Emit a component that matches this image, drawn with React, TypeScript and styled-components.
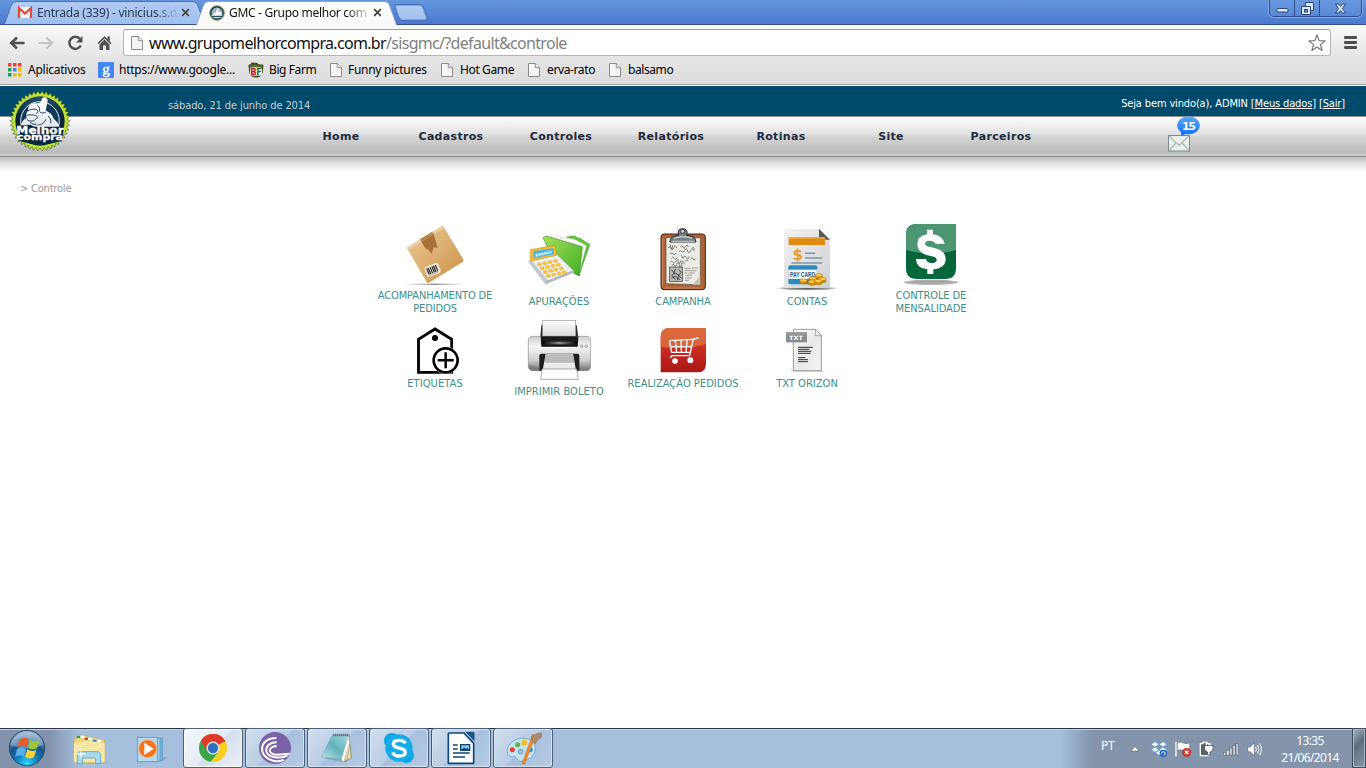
import React from "react";
import styled, { createGlobalStyle } from "styled-components";

const UI = `"Noto Sans", "Open Sans", sans-serif`;
const PAGE = `"DejaVu Sans Condensed", "DejaVu Sans", sans-serif`;

const GlobalStyle = createGlobalStyle`
  * { box-sizing: border-box; }
  html, body { margin: 0; padding: 0; background: #fff; overflow: hidden; }
  svg { display: block; flex: none; }
`;

const Screen = styled.div`
  width: 1366px;
  height: 768px;
  display: flex;
  flex-direction: column;
  overflow: hidden;
  font-family: ${UI};
`;

/* ---------- browser chrome ---------- */

const TabStrip = styled.div`
  height: 25px;
  flex: none;
  display: flex;
  padding-left: 4px;
  background: linear-gradient(#6596de, #4a79cd);
  border-bottom: 1px solid #34508a;
`;

const Tab = styled.div<{ $active?: boolean }>`
  position: relative;
  z-index: ${(p) => (p.$active ? 2 : 1)};
  height: ${(p) => (p.$active ? 25 : 24)}px;
  width: 201px;
  margin-right: -9px;
  padding: 0 14px 0 13px;
  display: flex;
  align-items: center;
  flex: none;
  &::before,
  &::after {
    content: "";
    position: absolute;
    z-index: -1;
    top: 1px;
    bottom: 0;
    border: 1px solid ${(p) => (p.$active ? "#8aa6d2" : "#4d72b4")};
    border-bottom: 0;
    background: ${(p) => (p.$active ? "linear-gradient(#ffffff, #f8f8f8)" : "linear-gradient(#b0cbf3, #a0bfee)")};
  }
  &::before {
    left: 4px;
    width: 110px;
    border-right: 0;
    border-radius: 5px 0 0 0;
    transform: skewX(-20deg);
  }
  &::after {
    right: 4px;
    width: 110px;
    border-left: 0;
    border-radius: 0 5px 0 0;
    transform: skewX(20deg);
  }
`;

const TabTitle = styled.span<{ $active?: boolean }>`
  width: 144px;
  flex: none;
  margin-left: 4px;
  overflow: hidden;
  white-space: nowrap;
  font-size: 12px;
  letter-spacing: ${(p) => (p.$active ? "-0.3px" : "-0.22px")};
  line-height: 18px;
  color: ${(p) => (p.$active ? "#111" : "#2b3850")};
  mask-image: linear-gradient(90deg, #000 118px, transparent 142px);
  padding-top: 1px;
`;

const NewTab = styled.div`
  width: 28px;
  height: 15px;
  margin: 5px 0 0 9px;
  border: 1px solid #86a9e2;
  outline: 1px solid #4670bd;
  border-radius: 3px;
  background: linear-gradient(#b0cbf3, #a3c0ee);
  transform: skewX(20deg);
`;

const WindowControls = styled.div`
  display: flex;
  height: 17px;
  margin-left: auto;
  margin-right: 4px;
  border: 1px solid #2c4f8f;
  border-top: 0;
  border-radius: 0 0 5px 5px;
  box-shadow: 0 0 0 1px #84a9e6;
  overflow: hidden;
`;

const WindowButton = styled.div<{ $w: number }>`
  width: ${(p) => p.$w}px;
  display: flex;
  align-items: center;
  justify-content: center;
  background: linear-gradient(#6a99df, #5888d4);
  & + & {
    border-left: 1px solid #2c4f8f;
  }
`;

const Toolbar = styled.div`
  height: 32px;
  flex: none;
  display: flex;
  align-items: center;
  padding: 3px 9px 0 9px;
  background: linear-gradient(#f9f9f9, #e6e6e6);
`;

const ToolIcons = styled.div`
  display: flex;
  gap: 13px;
  width: 114px;
`;

const UrlField = styled.div`
  width: 1208px;
  height: 27px;
  display: flex;
  align-items: center;
  padding: 0 4px 0 7px;
  border: 1px solid #b5b5b5;
  border-top-color: #9f9f9f;
  border-radius: 3px;
  background: #fff;
`;

const UrlText = styled.span`
  margin-left: 6px;
  font-size: 16px;
  letter-spacing: -0.68px;
  line-height: 22px;
  color: #111;
  white-space: nowrap;
  flex: 1;
  i {
    font-style: normal;
    color: #808080;
  }
`;

const MenuIcon = styled.div`
  width: 13px;
  margin-left: 13px;
  display: grid;
  gap: 2px;
  span {
    height: 3px;
    border-radius: 1px;
    background: #505050;
  }
`;

const BookmarkBar = styled.div`
  height: 29px;
  flex: none;
  display: flex;
  padding: 0 0 2px 8px;
  background: linear-gradient(#e5e5e5, #dcdcdc);
  border-bottom: 1px solid #fff;
  box-shadow: inset 0 -1px #a2a2a2;
`;

const Bookmark = styled.div<{ $w: number }>`
  width: ${(p) => p.$w}px;
  display: flex;
  align-items: center;
  white-space: nowrap;
`;

const BookmarkIcon = styled.div<{ $w: number }>`
  width: ${(p) => p.$w}px;
  flex: none;
`;

const BookmarkText = styled.span<{ $ls: number }>`
  font-size: 12px;
  letter-spacing: ${(p) => p.$ls}px;
  line-height: 18px;
  color: #000;
`;

/* ---------- site ---------- */

const Site = styled.main`
  position: relative;
  flex: 1;
  display: flex;
  flex-direction: column;
  font-family: ${PAGE};
  font-size: 11px;
`;

const TopBar = styled.header`
  height: 30px;
  flex: none;
  display: flex;
  justify-content: space-between;
  padding: 0 21px 0 168px;
  background: #004a6b;
  line-height: 14px;
  white-space: nowrap;
`;

const DateText = styled.span`
  padding-top: 13px;
  color: #c3d0d8;
  letter-spacing: -0.1px;
`;

const Welcome = styled.span`
  padding-top: 11px;
  color: #fff;
  letter-spacing: -0.14px;
`;

const SiteLink = styled.span`
  text-decoration: underline;
`;

const Nav = styled.nav`
  height: 41px;
  flex: none;
  display: flex;
  padding-left: 286px;
  border-top: 1px solid #8f8f8f;
  border-bottom: 1px solid #8d8d8d;
  background: linear-gradient(#fdfdfd 0, #e0e0e0 18px, #d6d6d6 19px, #bababa 36px, #c8c8c8 37px, #c4c4c4 39px);
`;

const NavItem = styled.span`
  width: 110px;
  padding-top: 13px;
  text-align: center;
  font: bold 11px/14px "DejaVu Sans", sans-serif;
  letter-spacing: 0.32px;
  color: #232a3d;
`;

const Mail = styled.div`
  position: relative;
  width: 34px;
  margin-left: 112px;
  padding-top: 18px;
`;

const MailBadge = styled.div`
  position: absolute;
  left: 8px;
  top: -1px;
  width: 24px;
  height: 20px;
`;

const NavShadow = styled.div`
  height: 16px;
  flex: none;
  background: linear-gradient(#bcbcbc, #dedede 35%, #f6f6f6 75%, #fff);
`;

const Logo = styled.div`
  position: absolute;
  left: 9px;
  top: 4px;
`;

const Breadcrumb = styled.div`
  padding: 9px 0 0 20px;
  height: 49px;
  flex: none;
  line-height: 14px;
  color: #999;
  letter-spacing: -0.2px;
`;

const TileGrid = styled.div`
  display: grid;
  grid-template-columns: repeat(5, 124px);
  grid-template-rows: 93px 81px;
  row-gap: 3px;
  padding-left: 373px;
  align-items: center;
`;

const Tile = styled.div<{ $twoLines: boolean }>`
  display: flex;
  flex-direction: column;
  align-items: center;
  gap: 3px;
  padding-bottom: ${(p) => (p.$twoLines ? 0 : 1)}px;
`;

const TileLabel = styled.span<{ $ls: number }>`
  width: 122px;
  text-align: center;
  line-height: 13px;
  font-size: 11px;
  color: #3b8f8b;
  letter-spacing: ${(p) => p.$ls}px;
  white-space: pre-line;
`;

/* ---------- taskbar ---------- */

const Taskbar = styled.footer`
  height: 40px;
  flex: none;
  display: flex;
  padding-left: 7px;
  background: linear-gradient(90deg, #8192aa 0, #8192aa 48px, #a5bfdd 80px, #a5bfdd 1060px, #8394ab 1092px, #8394ab);
  box-shadow: inset 0 1px #2a3341, inset 0 2px #c4d3e6;
`;

const Pinned = styled.div<{ $ml: number }>`
  margin-left: ${(p) => p.$ml}px;
`;

const TaskButtons = styled.div`
  display: flex;
  gap: 2px;
  margin-left: 13px;
`;

const TaskButton = styled.div<{ $active?: boolean }>`
  width: 60px;
  height: 40px;
  display: flex;
  justify-content: center;
  border: 1px solid #4d5f78;
  border-radius: 3px;
  background: ${(p) =>
    p.$active
      ? "linear-gradient(135deg, #f5f8fc, #e3ebf5 50%, #d3dfed 52%, #eaf0f7)"
      : "linear-gradient(135deg, #d3dfee, #bacde4 48%, #a9c1de 52%, #b5cae3)"};
  box-shadow: inset 0 0 0 1px ${(p) => (p.$active ? "#ffffff" : "#d6e2f0")};
  svg {
    margin-top: -1px;
  }
`;

const Tray = styled.div`
  display: flex;
  margin-left: auto;
  color: #fff;
  font-size: 12px;
`;

const Lang = styled.span`
  padding-top: 9px;
  width: 26px;
  line-height: 18px;
  letter-spacing: -0.3px;
`;

const TrayIcons = styled.div`
  display: flex;
  gap: 8px;
  padding-top: 13px;
  width: 143px;
`;

const Clock = styled.div`
  width: 80px;
  padding-top: 4px;
  text-align: center;
  line-height: 17px;
  letter-spacing: -0.65px;
`;

const ShowDesktop = styled.div`
  width: 14px;
  margin-left: 2px;
  border: 1px solid #414d5f;
  box-shadow: inset 0 0 0 1px #a9b6c7;
  background: linear-gradient(135deg, #aab5c4, #5f6d81 40%, #8796ab);
`;

/* ---------- drawings ---------- */

const PageIcon = () => (
  <svg width="12" height="14" viewBox="0 0 12 14">
    <path d="M.5.5h6.8l4.2 4.2v8.8H.5z" fill="#f5f5f5" stroke="#8a8a8a" />
    <path d="M7.3.5v4.2h4.2" fill="#fff" stroke="#8a8a8a" />
  </svg>
);

const CloseX = () => (
  <svg width="9" height="9" viewBox="0 0 9 9">
    <path d="M1.2 1.2l6.6 6.6M7.8 1.2L1.2 7.8" stroke="#444" strokeWidth="1.7" />
  </svg>
);

const Gmail = () => (
  <svg width="16" height="16" viewBox="0 0 16 16">
    <rect x="1" y="3" width="14" height="11" fill="#f4f4f4" />
    <path d="M2 14L7 8.500M14 14L9 8.500" stroke="#d5d5d5" />
    <path d="M2 14V4l6 5.500L14 4v10" fill="none" stroke="#dc4a38" strokeWidth="2.200" />
  </svg>
);

const seal = (cx: number, cy: number, r1: number, r2: number, n: number) =>
  Array.from({ length: n * 2 }, (_, i) => {
    const a = (Math.PI * i) / n;
    const r = i % 2 ? r1 : r2;
    return `${(cx + r * Math.cos(a)).toFixed(1)},${(cy + r * Math.sin(a)).toFixed(1)}`;
  }).join(" ");

const SealFavicon = () => (
  <svg width="16" height="16" viewBox="0 0 16 16">
    <circle cx="8" cy="8" r="7.300" fill="#123d55" stroke="#8aa050" strokeWidth="1" />
    <circle cx="8" cy="8" r="5.500" fill="#9fb4c2" />
    <path d="M4 9l3-2 1.500-4 1 .5v3l3 1v2.500L4 10z" fill="#fff" />
    <path d="M2 10.500h12l-1.500 2H3.500z" fill="#eef3f5" />
    <path d="M3 11.500h10" stroke="#2a4d62" />
  </svg>
);

const LogoDrawing = () => (
  <svg width="62" height="62" viewBox="27 12 186 186">
    <defs>
      <linearGradient id="hand" x1="0" y1="0" x2="0" y2="1">
        <stop offset="0" stopColor="#fff" />
        <stop offset="1" stopColor="#d9e2e8" />
      </linearGradient>
      <linearGradient id="ring" x1="0" y1="0" x2="0" y2="1">
        <stop offset="0" stopColor="#22506f" />
        <stop offset=".5" stopColor="#041f38" />
        <stop offset="1" stopColor="#0b3554" />
      </linearGradient>
    </defs>
    <polygon points={seal(120, 105, 81, 90, 42)} fill="#c0e22e" stroke="#24482c" strokeWidth="1.500" />
    <circle cx="120" cy="105" r="74" fill="url(#ring)" />
    <circle cx="120" cy="105" r="58" fill="#0d3a5a" stroke="#e6eef2" strokeWidth="3" />
    <path
      d="M62 122c2-14 8-22 18-26-2-8-2-16 4-22 0-12 6-22 16-22h14c4 0 8-2 10-6 0-8 4-12 10-12 8 0 10 8 8 16-2 10-4 16-4 24 14 6 20 14 24 26 8 6 14 12 16 22l-4 20H66z"
      fill="url(#hand)"
    />
    <path d="M84 74c6-2 14-6 24-4 8 2 8 12 0 12M80 88c8-2 16-2 26 0 8 2 8 12-2 12M80 100c6 6 14 6 24 4M112 58c6 4 8 10 6 18M90 108c4 6 12 8 20 6M138 78c-6 4-14 4-18 0M144 90c6 4 10 12 8 22M112 118c14-2 22-8 26-18" fill="none" stroke="#16384f" strokeWidth="2.800" />
    <path d="M48 119l42-3 14 6h88l-6 42q-66 22-130 0z" fill="#06263f" />
    <text textAnchor="middle" fontFamily="DejaVu Sans" fontWeight="bold" fill="#fff" stroke="#fff" strokeWidth=".8">
      <tspan x="120" y="143" textLength="142" lengthAdjust="spacingAndGlyphs" fontSize="31">Melhor</tspan>
      <tspan x="120" y="163" textLength="138" lengthAdjust="spacingAndGlyphs" fontSize="26">compra</tspan>
    </text>
  </svg>
);

const BoxIcon = () => (
  <svg width="64" height="64" viewBox="99 21 192 192">
    <defs>
      <linearGradient id="card" x1="0" y1="0" x2="1" y2="1">
        <stop offset="0" stopColor="#ecc894" />
        <stop offset=".5" stopColor="#dcaf72" />
        <stop offset="1" stopColor="#c98f40" />
      </linearGradient>
      <linearGradient id="boxline">
        <stop offset="0" stopColor="#999" stopOpacity="0" />
        <stop offset=".5" stopColor="#777" />
        <stop offset="1" stopColor="#999" stopOpacity="0" />
      </linearGradient>
    </defs>
    <rect x="99" y="206" width="190" height="3.500" fill="url(#boxline)" />
    <path d="M110 98L216 33q3-1 5 2l60 100q0 4-3 6L176 204q-4 0-6-3z" fill="url(#card)" />
    <path d="M111 97L216 34l6 6-107 65z" fill="#f1d5a6" opacity=".7" />
    <path d="M150 73l36-22 5 6 12 42-12-2-6 20-12-14-6-2z" fill="#a8703a" />
    <path d="M152 74l34-22 4 7-34 22z" fill="#bd8950" />
    <g transform="rotate(-22 188 165)">
      <rect x="166" y="149" width="44" height="32" rx="8" fill="#f6ead6" />
      <path d="M173 154v20M178 154v20M184 154v20M190 154v20M195 154v20M201 154v20" stroke="#222" strokeWidth="3.500" />
      <path d="M172 177h30" stroke="#a89884" strokeWidth="2" />
    </g>
  </svg>
);

const CalcIcon = () => (
  <svg width="64" height="64" viewBox="471 39 192 192">
    <defs>
      <linearGradient id="green" x1="0" y1="0" x2="1" y2="1">
        <stop offset="0" stopColor="#a6e05a" />
        <stop offset="1" stopColor="#3fae26" />
      </linearGradient>
    </defs>
    <path d="M590 64l42 6 28 20-32 92-12-4z" fill="#4fb52c" />
    <path d="M570 66l66 10 14 14-24 90z" fill="#f7f7f7" stroke="#c9d0c4" strokeWidth="2" />
    <path d="M594 62l20 0 46 26-3 8z" fill="#62c33a" />
    <path d="M519 68l10-5 108 32-9 88-70-36z" fill="url(#green)" stroke="#3b962a" strokeWidth="2" />
    <path d="M479 136l80-18 53 51-84 36z" fill="#eef0f2" />
    <path d="M475 140l8-6 54 66-10 9z" fill="#c4c9cf" />
    <path d="M527 208l84-35v-8l-84 34z" fill="#b3b8c0" />
    <path d="M482 104l74-13 3 30-77 17z" fill="#f7bd2b" stroke="#cf8e10" strokeWidth="2" />
    <path d="M490 109l61-10 1 19-61 12z" fill="#45b4e9" />
    <path d="M497 121l48-10" stroke="#e2f8ff" strokeWidth="8" strokeDasharray="6 3" />
    <g fill="#ffcb33" stroke="#e09a18" strokeWidth="1.500">
      {[0, 1, 2, 3].flatMap((r) =>
        [0, 1, 2, 3].map((c) => <ellipse key={`${r}${c}`} cx={508 + c * 16 + r * 9} cy={148 - c * 3.5 + r * 11.5} rx="6" ry="4.500" />)
      )}
    </g>
  </svg>
);

const ClipboardIcon = () => (
  <svg width="64" height="64" viewBox="123 39 192 192">
    <rect x="153" y="57" width="133" height="167" rx="9" fill="#ad6336" stroke="#3a221a" strokeWidth="3" />
    <path d="M158 68v146M162 219h116" stroke="#cf8a5c" strokeWidth="3" />
    <path d="M168 68h103v116l-4 25-99-3z" fill="#ecebe6" stroke="#55483f" strokeWidth="2" />
    <path d="M246 209l25-26v26z" fill="#c9c6bd" />
    <path d="M180 88c5 22 6 20 8 2M174 98q6-6 10 2t8-3 8 2M212 96q4-8 7 0t8-2q6-8 8 2M180 117q6-6 10 0t9-4M206 110q6-6 9 0t9-4 9 2 11-4 8 4M184 130q5-9 9 0t8-3M214 120l5 10q6-12 10-2t9-4M180 142q6-7 9 0t9-3 8 2 8-6M226 138q6-6 9 0M242 132q6-8 8 0t8-2M186 152q4-9 7-1t7-3 8 3 7-4 8 1" stroke="#444" strokeWidth="1.900" fill="none" />
    <rect x="179" y="156" width="38" height="43" fill="#b9b7b2" stroke="#333" strokeWidth="2" />
    <path d="M184 164l8 10-6 8 10 12M196 162l-4 12 14 6-4 16M206 164l8 8-8 8 8 10M184 190l12-6 14 10" stroke="#333" strokeWidth="2.500" fill="none" />
    <path d="M222 160h20m4-1h18M224 167h36M222 174h10m4 0h18M226 181h20M225 189h20M224 196h12" stroke="#777" strokeWidth="2" />
    <path d="M180 81q0-14 14-18l12-2q-6-20 12-20t12 20l14 2q12 2 14 18z" fill="#777e80" stroke="#292e30" strokeWidth="3" />
    <circle cx="218" cy="49" r="6" fill="#ddd" stroke="#333" strokeWidth="3" />
    <path d="M192 70q26-10 54 0" stroke="#b9c2c4" strokeWidth="5" fill="none" />
    <path d="M184 79h70" stroke="#cdd4d5" strokeWidth="3" />
  </svg>
);

const Coin = ({ x, y }: { x: number; y: number }) => (
  <g stroke="#a96b00" strokeWidth="1.500">
    <path d={`M${x - 11} ${y}v8q11 7 22 0v-8z`} fill="#d98e10" />
    <ellipse cx={x} cy={y} rx="11" ry="5" fill="#ffcd45" />
  </g>
);

const BillIcon = () => (
  <svg width="64" height="64" viewBox="495 39 192 192">
    <defs>
      <linearGradient id="paper" x1="0" y1="0" x2="1" y2="1">
        <stop offset="0" stopColor="#f2f2f2" />
        <stop offset="1" stopColor="#cfd0d2" />
      </linearGradient>
      <radialGradient id="billshade">
        <stop offset="0" stopColor="#555" />
        <stop offset=".7" stopColor="#888" stopOpacity=".8" />
        <stop offset="1" stopColor="#aaa" stopOpacity="0" />
      </radialGradient>
    </defs>
    <ellipse cx="592" cy="220" rx="95" ry="7" fill="url(#billshade)" />
    <path d="M522 46q0-4 4-4h101l33 33v141q0 3-4 3H526q-4 0-4-4z" fill="url(#paper)" />
    <path d="M627 41l33 34-33-3z" fill="#55585c" />
    <rect x="536" y="66" width="109" height="24" fill="#e08a12" />
    <path d="M536 66h109v5H536z" fill="#f2a83c" />
    <text x="563" y="136" textAnchor="middle" fontFamily="DejaVu Sans" fontWeight="bold" fontSize="45" fill="#f09a1a">$</text>
    <path d="M585 115h31M585 129h52M544 144h93" stroke="#7f98ad" strokeWidth="4.500" />
    <rect x="535" y="151" width="87" height="57" rx="6" fill="#2b8cc2" />
    <path d="M535 164h87v28h-87z" fill="#f1f6f9" />
    <text x="540" y="185" textLength="76" lengthAdjust="spacingAndGlyphs" fontFamily="Liberation Sans" fontWeight="bold" fontSize="20" fill="#1e5d8c">PAY CARD</text>
    <Coin x={626} y={181} />
    <Coin x={608} y={190} />
    <Coin x={637} y={192} />
    <Coin x={580} y={196} />
    <Coin x={606} y={200} />
    <Coin x={625} y={198} />
  </svg>
);

const DollarIcon = () => (
  <svg width="64" height="64" viewBox="147 21 192 192">
    <defs>
      <linearGradient id="dgreen" x1="0" y1="0" x2="0" y2="1">
        <stop offset="0" stopColor="#046236" />
        <stop offset="1" stopColor="#07683b" />
      </linearGradient>
    </defs>
    <ellipse cx="243" cy="202" rx="82" ry="8" fill="#b5b5b5" />
    <ellipse cx="243" cy="201" rx="62" ry="5" fill="#a5a5a5" />
    <path d="M200 27h118v133q0 32-32 32h-86q-32 0-32-32V59q0-32 32-32z" fill="url(#dgreen)" />
    <path d="M200 27h118v78q-70 22-150 0V59q0-32 32-32z" fill="#4d9673" />
    <path
      d="M231 44h18v14q28 3 35 28h-27q-6-9-18-9-14 0-14 9 0 7 16 10 46 8 46 35 0 28-37 32v14h-18v-14q-34-3-34-31h30q3 12 17 12 15 0 15-10 0-7-15-10-43-8-43-37 0-24 29-29z"
      fill="#fff"
    />
  </svg>
);

const TagIcon = () => (
  <svg width="48" height="48" viewBox="123 333 144 144">
    <path d="M145.500 472V373L195 342l50 31v99z" fill="#fff" stroke="#000" strokeWidth="8.500" />
    <circle cx="195" cy="369" r="9" />
    <circle cx="227" cy="436" r="41" fill="#fff" />
    <circle cx="227" cy="436" r="36" fill="#fff" stroke="#000" strokeWidth="8" />
    <path d="M203 436h48M227 412v48" stroke="#000" strokeWidth="7.500" />
  </svg>
);

const PrinterIcon = () => (
  <svg width="64" height="64" viewBox="471 309 192 192">
    <defs>
      <linearGradient id="prn" x1="0" y1="0" x2="0" y2="1">
        <stop offset="0" stopColor="#cfcfcf" />
        <stop offset=".3" stopColor="#f4f4f4" />
        <stop offset=".7" stopColor="#cfcfcf" />
        <stop offset="1" stopColor="#6e6e6e" />
      </linearGradient>
      <linearGradient id="sheet" x1="0" y1="0" x2="0" y2="1">
        <stop offset="0" stopColor="#fff" />
        <stop offset="1" stopColor="#d2d2d2" />
      </linearGradient>
      <linearGradient id="slot">
        <stop offset="0" stopColor="#000" />
        <stop offset=".5" stopColor="#8c8c8c" />
        <stop offset="1" stopColor="#000" />
      </linearGradient>
    </defs>
    <path d="M514 330h106l6 48H510z" fill="#26282a" />
    <rect x="518" y="316" width="99" height="56" fill="url(#sheet)" stroke="#999" strokeWidth="2" />
    <rect x="475" y="364" width="187" height="103" rx="13" fill="url(#prn)" stroke="#8b8b8b" strokeWidth="2" />
    <path d="M512 364h113l-2 32H514z" fill="#17191b" />
    <rect x="516" y="380" width="105" height="8" fill="url(#slot)" />
    <path d="M508 397h122" stroke="#fff" strokeWidth="3" />
    <circle cx="635" cy="394" r="4" fill="#eee" stroke="#777" strokeWidth="2" />
    <circle cx="649" cy="394" r="4" fill="#eee" stroke="#777" strokeWidth="2" />
    <path d="M508 467v-45q0-6 6-6h108q6 0 6 6v45z" fill="#1b1d1f" />
    <path d="M527 417h82l14 76H513z" fill="url(#sheet)" />
    <path d="M527 417h82l5 26H523z" fill="#9a9a9a" opacity=".65" />
    <path d="M516 462h104l5 31H512z" fill="#fff" stroke="#8a8a8a" strokeWidth="2" />
    <path d="M476 450q0 17 14 17h18v-10z" fill="#777" opacity=".6" />
  </svg>
);

const CartIcon = () => (
  <svg width="48" height="48" viewBox="147 333 144 144">
    <defs>
      <linearGradient id="red" x1="0" y1="0" x2="0" y2="1">
        <stop offset="0" stopColor="#d4551f" />
        <stop offset=".6" stopColor="#c3251f" />
        <stop offset="1" stopColor="#a81714" />
      </linearGradient>
    </defs>
    <path d="M178 339h110v107q0 26-26 26H152V365q0-26 26-26z" fill="url(#red)" />
    <path d="M178 339h110v48q-60 20-136 8v-30q0-26 26-26z" fill="#dd7345" opacity=".75" />
    <path d="M266 369l-16 3-11 50H189M179 377l69-4M178 378l7 34h56M182 395h62M196 378l4 34M213 377l1 35M231 376l-3 36M189 422q-8 1-8 8" fill="none" stroke="#fff" strokeWidth="4" />
    <circle cx="195" cy="438" r="8.500" fill="#fff" />
    <circle cx="241" cy="436" r="9" fill="#fff" />
  </svg>
);

const TxtIcon = () => (
  <svg width="48" height="48" viewBox="519 333 144 144">
    <defs>
      <linearGradient id="txtpage" x1="0" y1="0" x2="1" y2="1">
        <stop offset="0" stopColor="#fdfdfd" />
        <stop offset=".5" stopColor="#e9e9e9" />
        <stop offset="1" stopColor="#f4f4f4" />
      </linearGradient>
    </defs>
    <path d="M542 469h100" stroke="#ddd" strokeWidth="4" />
    <path d="M550 343h66l18 19v105h-84z" fill="url(#txtpage)" stroke="#999" strokeWidth="3" />
    <path d="M616 343v19h18z" fill="#fff" stroke="#999" strokeWidth="2.500" />
    <rect x="528" y="351" width="63" height="31" fill="#8b8b8b" />
    <path d="M528 351h63v8h-63z" fill="#9d9d9d" />
    <text x="537" y="374" textLength="42" lengthAdjust="spacingAndGlyphs" fontFamily="DejaVu Sans" fontWeight="bold" fontSize="18" fill="#fff">TXT</text>
    <path d="M564 397h45M564 403h34M564 409h40M564 415h38M564 428h22M564 434h30M564 440h30" stroke="#222" strokeWidth="2.800" />
  </svg>
);

const StartOrb = () => (
  <svg width="40" height="40" viewBox="21 24 120 120">
    <defs>
      <radialGradient id="orb" cx=".5" cy=".95" r=".95">
        <stop offset="0" stopColor="#2be0ff" />
        <stop offset=".3" stopColor="#0f86c0" />
        <stop offset=".6" stopColor="#17518a" />
        <stop offset="1" stopColor="#9dbad3" />
      </radialGradient>
    </defs>
    <circle cx="81" cy="84" r="53" fill="url(#orb)" stroke="#274a6c" strokeWidth="3" />
    <path d="M32 76a50 50 0 0 1 98 0q-50 18-98 0z" fill="#fff" opacity=".3" />
    <path d="M58 59q14-9 28-2l-6 24q-13-7-27 0z" fill="#ee5a24" />
    <path d="M90 59q12 8 29 2l-8 24q-13 7-27-2z" fill="#9bc53b" />
    <path d="M51 87q13-9 27 0l-6 24q-11-8-26-1z" fill="#5aafe9" />
    <path d="M82 88q13 9 27 2l-7 22q-13 7-27-1z" fill="#fdcf35" />
  </svg>
);

const ExplorerIcon = () => (
  <svg width="40" height="40" viewBox="207 24 120 120">
    <path d="M222 58q0-4 4-4h6v-8h28l4 6h28v6h18q4 0 4 4v62q0 4-4 4h-82q-5 0-5-4z" fill="#ecd27b" stroke="#c4a54c" strokeWidth="2" />
    <rect x="231" y="47" width="22" height="7" fill="#fff" /><rect x="231" y="47" width="10" height="7" fill="#23a52e" />
    <rect x="254" y="53" width="22" height="7" fill="#fff" /><rect x="254" y="53" width="10" height="7" fill="#c9472c" />
    <rect x="278" y="59" width="26" height="7" fill="#fff" /><rect x="278" y="59" width="12" height="7" fill="#2b8bdc" />
    <path d="M222 70l44-8 48 8v53q0 4-4 4h-84q-4 0-4-4z" fill="#f8e8a8" />
    <path d="M228 86l72-14M228 98l84-8" stroke="#eedb95" strokeWidth="2" />
    <path d="M232 103l6-8h58l6 8v28h-15v-17h-39v17h-16z" fill="#a6d8ee" stroke="#5aa0c6" strokeWidth="2.500" />
    <path d="M243 84l2 15 15 3-15 3-2 15-2-15-15-3 15-3z" fill="#fff" opacity=".9" />
  </svg>
);

const PlayerIcon = () => (
  <svg width="40" height="40" viewBox="390 24 120 120">
    <path d="M470 124l28-14v8z" fill="#7389a3" opacity=".6" />
    <path d="M425 52l62 3v67l-62 3z" fill="#78b5dc" stroke="#4c8fbe" strokeWidth="2" />
    <path d="M418 52l62 2v70l-62 1z" fill="#9ccbe6" stroke="#5596c2" strokeWidth="2" />
    <rect x="412" y="52" width="60" height="73" fill="#b7d9ec" stroke="#5c9cc6" strokeWidth="2.500" />
    <circle cx="443" cy="86" r="27" fill="#f4731f" stroke="#fbbd83" strokeWidth="2.500" />
    <path d="M433 68l28 18-28 19z" fill="#fff" />
  </svg>
);

const ChromeIcon = () => (
  <svg width="40" height="40" viewBox="579 24 120 120">
    <circle cx="639" cy="84" r="42" fill="#f7cf1c" />
    <path d="M639 84L602.600 63A42 42 0 0 1 675.400 63z" fill="#dd3a2a" />
    <path d="M602.600 63A42 42 0 0 0 632 125.500L657 94 639 84z" fill="#3ba648" />
    <path d="M639 65h37.500A42 42 0 0 0 602.600 63L621 92z" fill="#dd3a2a" />
    <circle cx="639" cy="84" r="19.500" fill="#f3f3f3" />
    <circle cx="639" cy="84" r="15.500" fill="#2e6fc0" />
  </svg>
);

const BitTorrentIcon = () => (
  <svg width="40" height="40" viewBox="765 24 120 120">
    <circle cx="825" cy="84" r="48" fill="#7a62a7" />
    <g fill="none" stroke="#fff" strokeWidth="6">
      <path d="M829 54C775 54 772 112 820 122Q840 127 851 119" />
      <path d="M830 67C792 66 786 108 825 112Q848 115 862 107" />
      <path d="M830 79C804 78 800 104 832 104L869 101" />
    </g>
  </svg>
);

const NotepadIcon = () => (
  <svg width="40" height="40" viewBox="51 24 120 120">
    <defs>
      <linearGradient id="note" x1="1" y1="0" x2="0" y2="1">
        <stop offset="0" stopColor="#a9dcdc" />
        <stop offset=".5" stopColor="#63b3bd" />
        <stop offset="1" stopColor="#c2e4e6" />
      </linearGradient>
    </defs>
    <path d="M70 115l54-3 20 14h-20z" fill="#55708d" opacity=".35" />
    <path d="M147 46l7 68-24 12-6-10z" fill="#e8e0b4" stroke="#7c765a" strokeWidth="2" />
    <path d="M146 60l-12 62M149 70l-8 50" stroke="#a59f80" strokeWidth="2" />
    <path d="M97 46h50l-23 73-60-8z" fill="url(#note)" stroke="#4c8d96" strokeWidth="1" />
    <path d="M146 48l-22 70 6 8 18-60z" fill="#fff" />
    <path d="M100 45h48" stroke="#4e5152" strokeWidth="7" strokeDasharray="3 3" />
  </svg>
);

const SkypeIcon = () => (
  <svg width="40" height="40" viewBox="237 24 120 120">
    <circle cx="275" cy="62" r="23" fill="#06a7e5" />
    <circle cx="319" cy="106" r="23" fill="#06a7e5" />
    <circle cx="297" cy="84" r="41" fill="#12ade9" />
    <path d="M316 70q-4-9-19-9-17 0-17 11 0 8 17 12 19 4 19 13 0 11-19 11-15 0-19-11" fill="none" stroke="#fff" strokeWidth="10" />
  </svg>
);

const WriterIcon = () => (
  <svg width="40" height="40" viewBox="423 24 120 120">
    <path d="M447 39h45l29 31v58q0 2-2 2h-72q-2 0-2-2V41q0-2 2-2z" fill="#fff" stroke="#0d4677" strokeWidth="5" />
    <path d="M499 37h23v24z" fill="#175a90" stroke="#0d4677" strokeWidth="3" />
    <path d="M459 75h14M459 87h14M459 99h50M459 111h36" stroke="#0d4677" strokeWidth="5" />
    <rect x="482" y="74" width="27" height="17" fill="#8ecbf0" stroke="#0d4677" strokeWidth="4" />
    <path d="M484 90l8-8 6 4 4-3 6 7z" fill="#0d4677" />
  </svg>
);

const PaintIcon = () => (
  <svg width="40" height="40" viewBox="609 24 120 120">
    <path d="M622 93c0-24 26-42 54-38 22 3 32 18 30 34-2 18-20 32-42 35-14 1-12-14-22-14-8 0-20 2-20-17z" fill="#c3e2f3" stroke="#6ba3c6" strokeWidth="2.500" />
    <circle cx="662" cy="95" r="7" fill="#9fc0d8" stroke="#4e86ab" strokeWidth="2" />
    <circle cx="637" cy="89" r="7.500" fill="#e5402d" />
    <circle cx="653" cy="74" r="7.500" fill="#58b947" />
    <circle cx="673" cy="68" r="8.500" fill="#f2bd1e" />
    <circle cx="691" cy="89" r="7.500" fill="#2d9be5" />
    <path d="M698 64l8 4-32 84-8-2z" transform="translate(0 -20)" fill="#ef8b2b" stroke="#c5661a" strokeWidth="1.500" />
    <path d="M697 62l-3-14 20-8 11 0-1 11-14 12-4 9z" fill="#b08a64" stroke="#8a6645" strokeWidth="1.500" />
  </svg>
);

const trayIcons = [
  <svg key="box" width="16" height="16" viewBox="276 63 48 48">
    <path d="M288 65l12 8-12 8-12-8zM312 65l12 8-12 8-12-8zM288 81l12 8-12 8-12-8zM312 81l12 8-12 8-12-8zM289 98l11-7 11 7-11 8z" fill="#eef7fe" stroke="#3b8ad0" strokeWidth="1.500" />
    <circle cx="313" cy="100" r="11" fill="#1c63c0" />
    <path d="M308 103a5.500 5.500 0 1 1 6 3" fill="none" stroke="#fff" strokeWidth="3" />
  </svg>,
  <svg key="flag" width="16" height="16" viewBox="348 63 48 48">
    <path d="M351 65v44" stroke="#fff" strokeWidth="4" />
    <path d="M355 69q10-4 18 0t19 0v22q-10 4-19 0t-18 0z" fill="#fff" stroke="#56616e" strokeWidth="1.500" />
    <circle cx="383" cy="97" r="12.500" fill="#d8352a" stroke="#8d2018" strokeWidth="1.500" />
    <path d="M378 92l10 10M388 92l-10 10" stroke="#fff" strokeWidth="4" />
  </svg>,
  <svg key="power" width="16" height="16" viewBox="420 63 48 48">
    <path d="M424 71h8v-4h12v4h6v36h-26z" fill="#59636f" stroke="#fff" strokeWidth="4" />
    <path d="M442 78v-9M454 78v-9" stroke="#fff" strokeWidth="4" />
    <path d="M437 77h25v8q0 9-9 11v9h-7v-9q-9-2-9-11z" fill="#fff" stroke="#333c47" strokeWidth="2" />
  </svg>,
  <svg key="signal" width="16" height="16" viewBox="492 63 48 48">
    {[0, 1, 2, 3, 4].map((i) => (
      <rect key={i} x={493 + i * 9.5} y={98 - i * 7} width="7.500" height={7 + i * 7} fill={i < 2 ? "#fff" : "#c7cdd6"} stroke="#4c5868" strokeWidth="1.500" />
    ))}
  </svg>,
  <svg key="sound" width="16" height="16" viewBox="564 63 48 48">
    <path d="M566 81h8l12-13v40l-12-13h-8z" fill="#fff" stroke="#3f4a58" strokeWidth="1.500" />
    <path d="M590 80q4 8 0 16M596 75q7 13 0 26M602 70q10 18 0 36" fill="none" stroke="#fff" strokeWidth="2.800" />
  </svg>,
];

const bookmarks = [
  {
    text: "Aplicativos", w: 90, iw: 20, ls: -0.25,
    icon: (
      <svg width="14" height="14" viewBox="0 0 14 14">
        {["#ee4035", "#ee4035", "#ee4035", "#17a05e", "#4285f4", "#f9bb06", "#17a05e", "#f9bb06", "#f9bb06"].map((c, i) => (
          <rect key={i} x={(i % 3) * 5} y={Math.floor(i / 3) * 5} width="3.500" height="3.500" fill={c} />
        ))}
      </svg>
    ),
  },
  {
    text: "https://www.google...", w: 150, iw: 21, ls: -0.25,
    icon: (
      <svg width="16" height="16" viewBox="0 0 16 16">
        <rect width="16" height="16" rx="1" fill="#4285f4" />
        <text x="8" y="11.500" textAnchor="middle" fontFamily="Liberation Serif" fontSize="15" fill="#fff" stroke="#fff" strokeWidth=".4">g</text>
      </svg>
    ),
  },
  {
    text: "Big Farm", w: 82, iw: 21, ls: -0.4,
    icon: (
      <svg width="16" height="16" viewBox="0 0 16 16">
        <path d="M1 3q5 0 7-2 3 3 7 2l-1 8q-2 5-6 4-6 0-6.500-6z" fill="#56752b" stroke="#2b3d15" />
        <path d="M3 1.500q4-1 6 1.500" stroke="#6d3f1c" strokeWidth="1.500" fill="none" />
        <rect x="2" y="5.500" width="12" height="8" rx="2" fill="#fff" />
        <text x="2.200" y="12.800" fontFamily="DejaVu Sans" fontWeight="bold" fontSize="8.500" fill="#b9151b">B</text>
        <text x="8.300" y="12.800" fontFamily="DejaVu Sans" fontWeight="bold" fontSize="8.500" fill="#2c6b2a">F</text>
      </svg>
    ),
  },
  { text: "Funny pictures", w: 111, iw: 18, ls: -0.3, icon: <PageIcon /> },
  { text: "Hot Game", w: 87, iw: 19, ls: -0.38, icon: <PageIcon /> },
  { text: "erva-rato", w: 81, iw: 19, ls: -0.38, icon: <PageIcon /> },
  { text: "balsamo", w: 90, iw: 19, ls: -0.42, icon: <PageIcon /> },
];

const navItems = ["Home", "Cadastros", "Controles", "Relatórios", "Rotinas", "Site", "Parceiros"];

const tiles = [
  { label: "ACOMPANHAMENTO DE\nPEDIDOS", icon: <BoxIcon />, ls: -0.12 },
  { label: "APURAÇÕES", icon: <CalcIcon />, ls: 0.03 },
  { label: "CAMPANHA", icon: <ClipboardIcon />, ls: -0.05 },
  { label: "CONTAS", icon: <BillIcon />, ls: 0 },
  { label: "CONTROLE DE\nMENSALIDADE", icon: <DollarIcon />, ls: -0.1 },
  { label: "ETIQUETAS", icon: <TagIcon />, ls: 0.1 },
  { label: "IMPRIMIR BOLETO", icon: <PrinterIcon />, ls: 0.06 },
  { label: "REALIZAÇÃO PEDIDOS", icon: <CartIcon />, ls: 0.03 },
  { label: "TXT ORIZON", icon: <TxtIcon />, ls: 0.03 },
];

export default function App() {
  return (
    <Screen>
      <GlobalStyle />
      <TabStrip>
        <Tab>
          <Gmail />
          <TabTitle>Entrada (339) - vinicius.s.d</TabTitle>
          <CloseX />
        </Tab>
        <Tab $active>
          <SealFavicon />
          <TabTitle $active>GMC - Grupo melhor com</TabTitle>
          <CloseX />
        </Tab>
        <NewTab />
        <WindowControls>
          <WindowButton $w={24}>
            <svg width="13" height="10" viewBox="0 0 13 10"><rect x="1" y="5.500" width="11" height="3.500" rx="1" fill="#dce9fb" stroke="#2c4777" /></svg>
          </WindowButton>
          <WindowButton $w={25}>
            <svg width="13" height="13" viewBox="0 0 13 13">
              <path d="M4.500.5h8v8H9.500v4H.5v-8h4z" fill="#dce9fb" stroke="#2c4777" />
              <path d="M4.500 4.500h5v4" fill="none" stroke="#2c4777" />
              <rect x="3.500" y="7.500" width="3" height="2.500" fill="#6a99df" stroke="#2c4777" />
            </svg>
          </WindowButton>
          <WindowButton $w={42}>
            <svg width="13" height="11" viewBox="0 0 13 11">
              <path d="M1.500 1h3L6.500 3.500 8.500 1h3L8.300 5.500 11.500 10h-3L6.500 7.500 4.500 10h-3L4.700 5.500z" fill="#dce9fb" stroke="#2c4777" />
            </svg>
          </WindowButton>
        </WindowControls>
      </TabStrip>
      <Toolbar>
        <ToolIcons>
          <svg width="16" height="16" viewBox="0 0 16 16"><path d="M15.500 8H3M8 2.500L2.200 8 8 13.500" fill="none" stroke="#505050" strokeWidth="2.600" /></svg>
          <svg width="16" height="16" viewBox="0 0 16 16"><path d="M.5 8H13M8.500 2.500L14 8l-5.500 5.500" fill="none" stroke="#c3c3c3" strokeWidth="2.200" /></svg>
          <svg width="16" height="16" viewBox="0 0 16 16"><path d="M13.800 10.500A6 6 0 1 1 13 4" fill="none" stroke="#505050" strokeWidth="2.500" /><path d="M15.500 1v6.500H9z" fill="#505050" /></svg>
          <svg width="16" height="16" viewBox="0 0 16 16"><path d="M8.500 1l7 7.300-1 1L8.500 3.500l-6 5.800-1-1z" fill="#505050" /><path d="M3.500 9.500l5-5 5 5V15H10v-4.500H7V15H3.500z" fill="#505050" /><path d="M11.500 1.500h2.300v5l-2.300-2.300z" fill="#505050" /></svg>
        </ToolIcons>
        <UrlField>
          <PageIcon />
          <UrlText>www.grupomelhorcompra.com.br<i>/sisgmc/?default&amp;controle</i></UrlText>
          <svg width="18" height="18" viewBox="0 0 18 18"><path d="M9 1l2.100 5.600 6 .3-4.700 3.700 1.700 5.800L9 13.100l-5.100 3.300 1.700-5.800L.9 6.900l6-.3z" fill="#fff" stroke="#777" strokeWidth="1.200" strokeLinejoin="round" /></svg>
        </UrlField>
        <MenuIcon><span /><span /><span /></MenuIcon>
      </Toolbar>
      <BookmarkBar>
        {bookmarks.map((b) => (
          <Bookmark key={b.text} $w={b.w}>
            <BookmarkIcon $w={b.iw}>{b.icon}</BookmarkIcon>
            <BookmarkText $ls={b.ls}>{b.text}</BookmarkText>
          </Bookmark>
        ))}
      </BookmarkBar>

      <Site>
        <TopBar>
          <DateText>sábado, 21 de junho de 2014</DateText>
          <Welcome>
            Seja bem vindo(a), ADMIN [<SiteLink>Meus dados</SiteLink>] [<SiteLink>Sair</SiteLink>]
          </Welcome>
        </TopBar>
        <Nav>
          {navItems.map((n) => (
            <NavItem key={n}>{n}</NavItem>
          ))}
          <Mail>
            <svg width="22" height="17" viewBox="0 0 22 17">
              <rect x=".5" y=".5" width="21" height="15.500" fill="#e9f0ee" stroke="#7d8c8b" />
              <path d="M1 1l10 9.500L21 1M1 15.500L8 8M21 15.500L14 8" fill="none" stroke="#a9b8b5" strokeWidth="1.200" />
            </svg>
            <MailBadge>
              <svg width="24" height="20" viewBox="0 0 24 20">
                <defs>
                  <linearGradient id="bubble" x1="0" y1="0" x2="0" y2="1">
                    <stop offset="0" stopColor="#5aa9ff" />
                    <stop offset="1" stopColor="#1673f3" />
                  </linearGradient>
                </defs>
                <path d="M5 15v5l7-3z" fill="#1673f3" />
                <ellipse cx="12.500" cy="9.300" rx="11.300" ry="9" fill="url(#bubble)" />
                <text x="13" y="13.500" textAnchor="middle" fontFamily="DejaVu Sans" fontWeight="bold" fontSize="11" textLength="14" fill="#fff">15</text>
              </svg>
            </MailBadge>
          </Mail>
        </Nav>
        <NavShadow />
        <Breadcrumb>&gt; Controle</Breadcrumb>
        <TileGrid>
          {tiles.map((t) => (
            <Tile key={t.label} $twoLines={t.label.includes("\n")}>
              {t.icon}
              <TileLabel $ls={t.ls}>{t.label}</TileLabel>
            </Tile>
          ))}
        </TileGrid>
        <Logo><LogoDrawing /></Logo>
      </Site>

      <Taskbar>
        <StartOrb />
        <Pinned $ml={22}><ExplorerIcon /></Pinned>
        <Pinned $ml={21}><PlayerIcon /></Pinned>
        <TaskButtons>
          <TaskButton $active><ChromeIcon /></TaskButton>
          <TaskButton><BitTorrentIcon /></TaskButton>
          <TaskButton><NotepadIcon /></TaskButton>
          <TaskButton><SkypeIcon /></TaskButton>
          <TaskButton><WriterIcon /></TaskButton>
          <TaskButton><PaintIcon /></TaskButton>
        </TaskButtons>
        <Tray>
          <Lang>PT</Lang>
          <TrayIcons>
            <svg width="16" height="16" viewBox="0 0 16 16"><path d="M4 10l4-4.500 4 4.500z" fill="#fff" stroke="#56616e" strokeWidth=".6" /></svg>
            {trayIcons}
          </TrayIcons>
          <Clock>
            13:35
            <br />
            21/06/2014
          </Clock>
          <ShowDesktop />
        </Tray>
      </Taskbar>
    </Screen>
  );
}
